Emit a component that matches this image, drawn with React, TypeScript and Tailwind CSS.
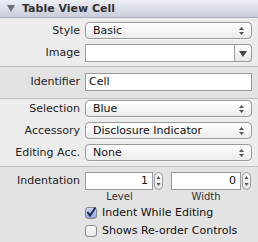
import React from "react";

const font = { fontFamily: '"DejaVu Sans", "Liberation Sans", sans-serif' };

function Arrows() {
  return (
    <svg width="7" height="10" viewBox="0 0 7 10" className="absolute right-[6px] top-[3px]">
      <path d="M3.5 1 L6 4 L1 4 Z" fill="#555" />
      <path d="M3.5 9 L6 6 L1 6 Z" fill="#555" />
    </svg>
  );
}

function Popup({ value }: { value: string }) {
  return (
    <div className="relative h-[17px] w-[167px] rounded-[4px] border border-[#9a9a9a] bg-gradient-to-b from-[#ffffff] to-[#ececec] shadow-[0_1px_0_rgba(255,255,255,0.6)] text-[11px] leading-[15px] pl-[7px] text-[#111]">
      {value}
      <Arrows />
    </div>
  );
}

function Row({ label, children }: { label: string; children: React.ReactNode }) {
  return (
    <div className="flex h-[17px] items-center">
      <div className="w-[85px] pr-[5px] text-right text-[11px] leading-[17px] text-[#222]">{label}</div>
      {children}
    </div>
  );
}

function Stepper() {
  return (
    <div className="relative ml-[1px] h-[18px] w-[9px] rounded-[5px] border border-[#9a9a9a] bg-gradient-to-b from-[#ffffff] to-[#e6e6e6]">
      <svg width="7" height="16" viewBox="0 0 7 16" className="absolute left-0 top-0">
        <path d="M3.5 3 L5.5 6 L1.5 6 Z" fill="#555" />
        <path d="M3.5 13 L5.5 10 L1.5 10 Z" fill="#555" />
      </svg>
    </div>
  );
}

export default function App() {
  return (
    <div className="w-[258px] h-[242px] overflow-hidden bg-[#ececec]" style={font}>
      <div className="flex h-[18px] items-center border-b border-[#a9acb8] bg-gradient-to-b from-[#eceef5] to-[#c9ccda] pl-[7px]">
        <svg width="8" height="7" viewBox="0 0 8 7">
          <path d="M0 0 L8 0 L4 7 Z" fill="#6b6f7a" />
        </svg>
        <span className="ml-[7px] text-[11px] leading-[17px] font-bold text-[#333]">Table View Cell</span>
      </div>
      <div className="flex flex-col gap-[5px] pt-[4px] pb-[4px] border-b border-[#bdbdbd]">
        <Row label="Style">
          <Popup value="Basic" />
        </Row>
        <div className="flex h-[18px] items-center">
          <div className="w-[85px] pr-[5px] text-right text-[11px] leading-[18px] text-[#222]">Image</div>
          <div className="flex h-[18px] w-[167px]">
            <div className="h-full flex-1 border border-[#9a9a9a] bg-white" />
            <div className="relative h-full w-[17px] rounded-r-[4px] border border-l-0 border-[#9a9a9a] bg-gradient-to-b from-[#ffffff] to-[#e8e8e8]">
              <svg width="8" height="6" viewBox="0 0 8 6" className="absolute left-[4px] top-[6px]">
                <path d="M0 0 L8 0 L4 6 Z" fill="#444" />
              </svg>
            </div>
          </div>
        </div>
      </div>
      <div className="bg-[#e3e3e3] border-b border-[#bdbdbd] pt-[6px] pb-[7px]">
        <div className="flex h-[18px] items-center">
          <div className="w-[85px] pr-[5px] text-right text-[11px] leading-[18px] text-[#222]">Identifier</div>
          <div className="h-[18px] w-[167px] border border-[#9a9a9a] bg-white pl-[3px] text-[11px] leading-[16px] text-[#111]">
            Cell
          </div>
        </div>
      </div>
      <div className="flex flex-col gap-[5px] pt-[1px] pb-[5px] border-b border-[#bdbdbd]">
        <Row label="Selection">
          <Popup value="Blue" />
        </Row>
        <Row label="Accessory">
          <Popup value="Disclosure Indicator" />
        </Row>
        <Row label="Editing Acc.">
          <Popup value="None" />
        </Row>
      </div>
      <div className="bg-[#e3e3e3] pt-[5px] h-[80px]">
        <div className="flex h-[18px] items-center">
          <div className="w-[85px] pr-[5px] text-right text-[11px] leading-[18px] text-[#222]">Indentation</div>
          <div className="flex">
            <div className="h-[18px] w-[68px] border border-[#9a9a9a] bg-white pr-[4px] text-right text-[11px] leading-[16px] text-[#111]">1</div>
            <Stepper />
          </div>
          <div className="ml-[8px] flex">
            <div className="h-[18px] w-[70px] border border-[#9a9a9a] bg-white pr-[4px] text-right text-[11px] leading-[16px] text-[#111]">0</div>
            <Stepper />
          </div>
        </div>
        <div className="mt-[1px] flex h-[12px] pl-[85px] text-[10px] leading-[12px] text-[#333]">
          <div className="w-[69px] text-center">Level</div>
          <div className="ml-[17px] w-[70px] text-center">Width</div>
        </div>
        <div className="mt-[4px] flex h-[12px] items-center pl-[85px] text-[11px] text-[#111]">
          <div className="relative h-[12px] w-[12px] rounded-[3px] border border-[#8a8a8a] bg-gradient-to-b from-[#c8d6f0] to-[#8fa9de]">
            <svg width="12" height="12" viewBox="0 0 12 12" className="absolute -left-[1px] -top-[2px]">
              <path d="M2.5 6 L5 9.5 L10.5 1.5" stroke="#1a2a50" strokeWidth="2" fill="none" />
            </svg>
          </div>
          <span className="ml-[5px] leading-[12px]">Indent While Editing</span>
        </div>
        <div className="mt-[6px] flex h-[12px] items-center pl-[85px] text-[11px] text-[#111]">
          <div className="h-[12px] w-[12px] rounded-[3px] border border-[#8a8a8a] bg-gradient-to-b from-[#ffffff] to-[#e4e4e4]" />
          <span className="ml-[5px] leading-[12px]">Shows Re-order Controls</span>
        </div>
      </div>
    </div>
  );
}
